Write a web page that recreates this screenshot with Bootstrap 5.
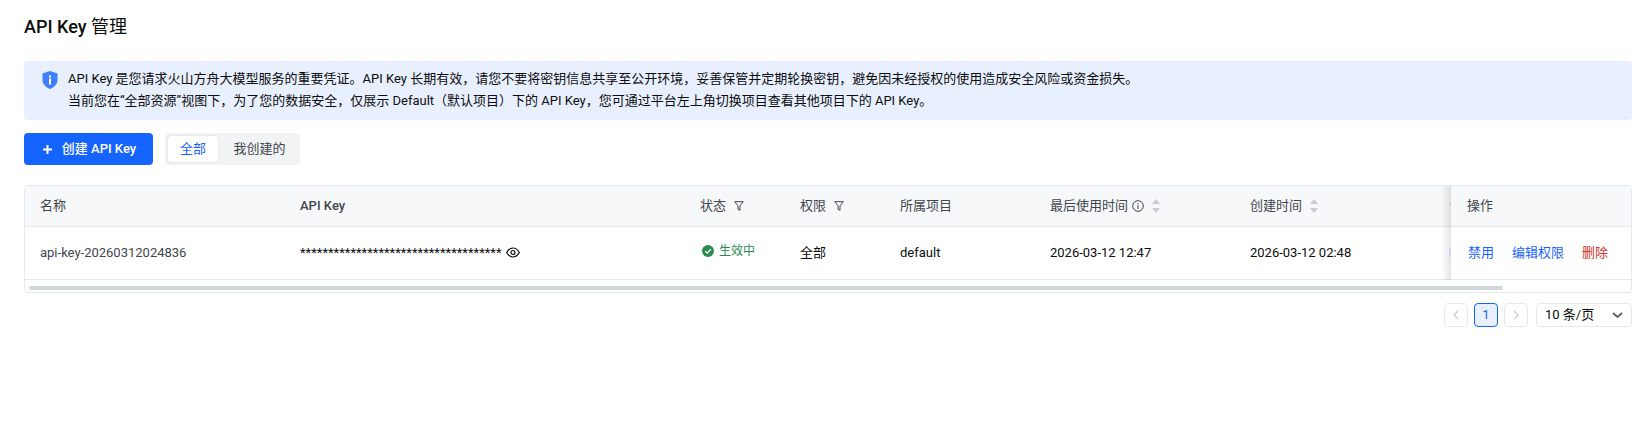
<!DOCTYPE html>
<html lang="zh">
<head>
<meta charset="utf-8">
<title>API Key 管理</title>
<link href="https://cdn.jsdelivr.net/npm/bootstrap@5.3.0/dist/css/bootstrap.min.css" rel="stylesheet">
<style>
body{font-family:Roboto,"Noto Sans CJK SC",sans-serif;font-size:13px;color:#0c0d0e;background:#fff}
.page-wrap{padding:16px 8px 0 24px}
.page-title{font-size:18px;font-weight:500;line-height:22px;margin:0 0 23px;color:#0c0d0e}
.page-title span{font-weight:400}
.notice{background:#e8effe;border-radius:4px;padding:7px 16px 0 18px;height:59px;line-height:22px;gap:10px;color:#0c0d0e}
.notice svg{flex:none;margin-top:3px}
.tool-row{margin-top:13px;gap:12px;height:32px}
.create-btn{background:#1664ff;border:0;border-radius:4px;color:#fff;font-size:13px;font-weight:500;height:32px;width:129px;padding:0 0 0 2px;gap:10px}
.create-btn:hover{background:#1664ff;color:#fff}
.seg{background:#f1f3f5;border-radius:4px;padding:3px;height:32px;width:135px}
.seg-item{height:26px;line-height:26px;text-align:center;color:#42464e;width:50px;border-radius:3px}
.seg-item.on{background:#fff;color:#1664ff;box-shadow:0 0 2px rgba(0,0,0,.16)}
.seg-item.rest{width:79px;padding-left:4px}
.tbl-box{margin-top:20px;border:1px solid #e5e8ef;border-radius:4px;height:108px;overflow:hidden}
.key-table{table-layout:fixed;width:1606px;margin:0;font-size:13px;--bs-table-bg:transparent}
.key-table th,.key-table td{padding:0 0 0 15px;vertical-align:middle;border-bottom:1px solid #e5e8ef;white-space:nowrap}
.key-table th{background:#f6f8fa;height:40px;color:#42464e;font-weight:400}
.key-table td{height:53px;color:#0c0d0e}
.key-table th.head-strong{font-weight:500}
.key-table .op-col{position:relative;padding-left:16px}
.key-table .op-col::before{content:"";position:absolute;left:-10px;top:0;bottom:-1px;width:10px;background:linear-gradient(to right,rgba(0,0,0,0),rgba(0,0,0,.1))}
.key-table th.op-col::after{content:"";position:absolute;left:-1px;top:17px;width:1px;height:1px;background:#d29a3c}
.key-table td.op-col::after{content:"";position:absolute;left:-2px;top:21px;width:2px;height:9px;background:#d8d2f4}
.key-table td.name-cell{color:#42464e}
.state{color:#2b8a52;gap:5px;padding-left:2px;font-size:12px}
.ops{gap:18px;padding-left:1px}
.op-link{color:#1664ff;text-decoration:none}
.op-link.del{color:#d7322c}
.h-icon{margin-left:8px;vertical-align:-1px}
.track{height:15px;padding:6px 0 0 4px}
.thumb{height:4px;border-radius:2px;background:#d2d7dd}
.pager{margin-top:10px;gap:6px;height:24px}
.pg{width:24px;height:24px;border:1px solid #e5e8ef;border-radius:4px;color:#0c0d0e}
.pg.on{background:#e8effe;border-color:#1664ff;color:#1664ff}
.pg-size{width:96px;height:24px;border:1px solid #e5e8ef;border-radius:4px;padding:0 8px;margin-left:2px}
</style>
</head>
<body>
<div class="page-wrap">
  <h1 class="page-title">API Key <span>管理</span></h1>
  <div class="notice d-flex">
    <svg width="16" height="18" viewBox="0 0 16 18"><path d="M8 0 15.500 2.600V9c0 4-3.200 7.200-7.500 9C3.700 16.200.5 13 .5 9V2.600Z" fill="#3f7fff"/><rect x="7" y="7.500" width="2" height="6" fill="#fff"/><rect x="7" y="4.500" width="2" height="2" fill="#fff"/></svg>
    <div>API Key 是您请求火山方舟大模型服务的重要凭证。API Key 长期有效，请您不要将密钥信息共享至公开环境，妥善保管并定期轮换密钥，避免因未经授权的使用造成安全风险或资金损失。<br>当前您在“全部资源”视图下，为了您的数据安全，仅展示 Default（默认项目）下的 API Key，您可通过平台左上角切换项目查看其他项目下的 API Key。</div>
  </div>
  <div class="tool-row d-flex">
    <button class="btn create-btn d-flex align-items-center justify-content-center"><svg width="9" height="9" viewBox="0 0 9 9"><path d="M4.500 0v9M0 4.500h9" stroke="#fff" stroke-width="2"/></svg><span>创建 API Key</span></button>
    <div class="seg d-flex"><div class="seg-item on">全部</div><div class="seg-item rest">我创建的</div></div>
  </div>
  <div class="tbl-box">
    <table class="table key-table">
      <colgroup><col style="width:260px"><col style="width:400px"><col style="width:100px"><col style="width:100px"><col style="width:150px"><col style="width:200px"><col style="width:216px"><col style="width:180px"></colgroup>
      <thead><tr>
        <th>名称</th><th class="head-strong">API Key</th>
        <th>状态<svg class="h-icon" width="10" height="10" viewBox="0 0 10 10"><path d="M.7.7h8.600L6 4.800V9.300L4 8.300V4.800Z" fill="none" stroke="#42464e"/></svg></th>
        <th>权限<svg class="h-icon" width="10" height="10" viewBox="0 0 10 10"><path d="M.7.7h8.600L6 4.800V9.300L4 8.300V4.800Z" fill="none" stroke="#42464e"/></svg></th>
        <th>所属项目</th>
        <th>最后使用时间<svg class="ms-1" width="12" height="12" viewBox="0 0 12 12" style="vertical-align:-2px"><circle cx="6" cy="6" r="5.300" fill="none" stroke="#42464e"/><path d="M6 5v4M6 3v1.200" stroke="#42464e"/></svg><svg class="ms-2" width="8" height="14" viewBox="0 0 8 14" style="vertical-align:-3px"><path d="M4 0 8 5H0ZM4 14 0 9h8Z" fill="#c7ccd6"/></svg></th>
        <th>创建时间<svg class="ms-2" width="8" height="14" viewBox="0 0 8 14" style="vertical-align:-3px"><path d="M4 0 8 5H0ZM4 14 0 9h8Z" fill="#c7ccd6"/></svg></th>
        <th class="op-col">操作</th>
      </tr></thead>
      <tbody><tr>
        <td class="name-cell">api-key-20260312024836</td>
        <td><span>************************************</span><svg class="ms-1" width="14" height="11" viewBox="0 0 14 11" style="vertical-align:-1px"><path d="M.7 5.500C2.300 2.600 4.500 1 7 1s4.700 1.600 6.300 4.500C11.700 8.400 9.500 10 7 10S2.300 8.400.7 5.500Z" fill="none" stroke="#0c0d0e" stroke-width="1.200"/><circle cx="7" cy="5.500" r="2" fill="none" stroke="#0c0d0e" stroke-width="1.200"/></svg></td>
        <td><span class="state d-inline-flex align-items-center"><svg width="12" height="12" viewBox="0 0 12 12"><circle cx="6" cy="6" r="6" fill="#2b8a52"/><path d="M3.200 6.200 5.200 8l3.600-3.800" fill="none" stroke="#fff" stroke-width="1.300"/></svg>生效中</span></td>
        <td>全部</td><td>default</td><td>2026-03-12 12:47</td><td>2026-03-12 02:48</td>
        <td class="op-col"><div class="ops d-flex"><a class="op-link" href="#">禁用</a><a class="op-link" href="#">编辑权限</a><a class="op-link del" href="#">删除</a></div></td>
      </tr></tbody>
    </table>
    <div class="track"><div class="thumb" style="width:1474px"></div></div>
  </div>
  <div class="pager d-flex justify-content-end">
    <div class="pg d-flex align-items-center justify-content-center"><svg width="6" height="10" viewBox="0 0 6 10"><path d="M5 1 1 5l4 4" fill="none" stroke="#c7ccd6" stroke-width="1.300"/></svg></div>
    <div class="pg on d-flex align-items-center justify-content-center">1</div>
    <div class="pg d-flex align-items-center justify-content-center"><svg width="6" height="10" viewBox="0 0 6 10"><path d="M1 1l4 4-4 4" fill="none" stroke="#c7ccd6" stroke-width="1.300"/></svg></div>
    <div class="pg-size d-flex align-items-center justify-content-between"><span>10 条/页</span><svg width="11" height="7" viewBox="0 0 11 7"><path d="M1 1l4.500 4L10 1" fill="none" stroke="#5c6370" stroke-width="2"/></svg></div>
  </div>
</div>
</body>
</html>
